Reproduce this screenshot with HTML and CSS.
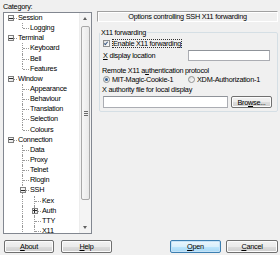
FILE: index.html
```html
<!DOCTYPE html>
<html lang="en">
<head>
<meta charset="UTF-8" />
<title>PuTTY Configuration</title>
<link rel="stylesheet" href="styles.css">
</head>
<body>
<div class="dialog">
  <div class="main">
    <div class="left">
      <div class="cat-label">Category:</div>
      <div class="tree-box">
        <ul class="tree">
          <li><span class="g b"><i class="exp minus"></i></span><span class="txt">Session</span></li>
          <li><span class="g"></span><span class="g l"></span><span class="txt">Logging</span></li>
          <li><span class="g b"><i class="exp minus"></i></span><span class="txt">Terminal</span></li>
          <li><span class="g"></span><span class="g t"></span><span class="txt">Keyboard</span></li>
          <li><span class="g"></span><span class="g t"></span><span class="txt">Bell</span></li>
          <li><span class="g"></span><span class="g l"></span><span class="txt">Features</span></li>
          <li><span class="g b"><i class="exp minus"></i></span><span class="txt">Window</span></li>
          <li><span class="g"></span><span class="g t"></span><span class="txt">Appearance</span></li>
          <li><span class="g"></span><span class="g t"></span><span class="txt">Behaviour</span></li>
          <li><span class="g"></span><span class="g t"></span><span class="txt">Translation</span></li>
          <li><span class="g"></span><span class="g t"></span><span class="txt">Selection</span></li>
          <li><span class="g"></span><span class="g l"></span><span class="txt">Colours</span></li>
          <li><span class="g b"><i class="exp minus"></i></span><span class="txt">Connection</span></li>
          <li><span class="g"></span><span class="g t"></span><span class="txt">Data</span></li>
          <li><span class="g"></span><span class="g t"></span><span class="txt">Proxy</span></li>
          <li><span class="g"></span><span class="g t"></span><span class="txt">Telnet</span></li>
          <li><span class="g"></span><span class="g t"></span><span class="txt">Rlogin</span></li>
          <li><span class="g"></span><span class="g b v"><i class="exp minus"></i></span><span class="txt">SSH</span></li>
          <li><span class="g"></span><span class="g v"></span><span class="g t"></span><span class="txt">Kex</span></li>
          <li><span class="g"></span><span class="g v"></span><span class="g b v"><i class="exp plus"></i></span><span class="txt">Auth</span></li>
          <li><span class="g"></span><span class="g v"></span><span class="g t"></span><span class="txt">TTY</span></li>
          <li><span class="g"></span><span class="g v"></span><span class="g t"></span><span class="txt">X11</span></li>
        </ul>
        <div class="scrollbar">
          <div class="arrow up"></div>
          <div class="track"><div class="thumb"><span class="grip"></span></div></div>
          <div class="arrow down"></div>
        </div>
      </div>
    </div>
    <div class="right">
      <div class="panel-title">Options controlling SSH X11 forwarding</div>
      <fieldset class="group">
        <legend>X11 forwarding</legend>
        <div class="check-row">
          <span class="checkbox checked"></span>
          <span class="focus">Enable X11 forwarding</span>
        </div>
        <div class="field-row">
          <span class="field-label"><u>X</u> display location</span>
          <span class="edit edit-short"></span>
        </div>
        <div class="plain-label">Remote X11 a<u>u</u>thentication protocol</div>
        <div class="radio-row">
          <span class="radio-item first"><span class="radio on"></span>MIT-Magic-Cookie-1</span>
          <span class="radio-item"><span class="radio"></span>XDM-Authorization-1</span>
        </div>
        <div class="plain-label">X authority file for local display</div>
        <div class="file-row">
          <span class="edit edit-long"></span>
          <span class="btn btn-browse">Bro<u>w</u>se...</span>
        </div>
      </fieldset>
    </div>
  </div>
  <div class="buttons">
    <span class="btn"><u>A</u>bout</span>
    <span class="btn btn-help"><u>H</u>elp</span>
    <span class="btn btn-default btn-open"><u>O</u>pen</span>
    <span class="btn btn-cancel"><u>C</u>ancel</span>
  </div>
</div>
</body>
</html>
```

FILE: styles.css
```css
:root{--bg:#f0f0f0;--txt:#000;--line:#999;--edge:#abadb3;}
*,*:before,*:after{box-sizing:border-box;}
html,body{margin:0;background:var(--bg);}
body{font-family:'Liberation Sans',Arial,sans-serif;font-size:7.3px;letter-spacing:-.25px;color:var(--txt);width:280px;height:255px;overflow:hidden;}
u{text-decoration:underline;text-underline-offset:1px;}

.main{display:flex;height:234px;}
.left{width:95px;padding-left:3px;display:flex;flex-direction:column;}
.cat-label{height:12px;padding-top:3px;line-height:8px;}
.tree-box{width:89px;height:222px;background:#fff;border:1px solid #828790;display:flex;overflow:hidden;}

ul.tree{list-style:none;margin:0;padding:0;flex:1;min-width:0;}
ul.tree li{display:flex;height:10.15px;align-items:center;white-space:nowrap;}
.g{position:relative;width:12px;height:100%;flex-shrink:0;display:flex;align-items:center;}
.g.t:before,.g.l:before,.g.v:before{content:'';position:absolute;left:6px;top:0;height:100%;border-left:1px dotted var(--line);}
.g.l:before{height:50%;}
.g.t:after,.g.l:after,.g.b:after{content:'';position:absolute;left:7px;right:-1px;top:50%;border-top:1px dotted var(--line);}
.g.b:after{left:9px;}
i.exp{position:relative;z-index:1;flex-shrink:0;width:6px;height:6px;margin-left:3.5px;border:1px solid #808080;background:linear-gradient(135deg,#fff,#e4e4e4);}
i.exp:before{content:'';position:absolute;left:0;top:1.5px;width:4px;height:1px;background:#2a2a2a;}
i.exp.plus:after{content:'';position:absolute;left:1.5px;top:0;width:1px;height:4px;background:#2a2a2a;}
.txt{padding-left:2px;line-height:10px;}

.scrollbar{width:12px;display:flex;flex-direction:column;background:#f4f4f4;border-left:1px solid #ededed;}
.arrow{height:12px;position:relative;}
.arrow:before{content:'';position:absolute;left:3px;border-left:2.5px solid transparent;border-right:2.5px solid transparent;}
.arrow.up:before{top:4px;border-bottom:3px solid #606060;}
.arrow.down:before{bottom:4px;border-top:3px solid #606060;}
.track{flex:1;padding:1px 1px 0 1px;}
.thumb{height:174px;border:1px solid #a8a8a8;border-radius:2px;background:linear-gradient(90deg,#f6f6f6,#e9e9e9);display:flex;align-items:center;justify-content:center;}
.grip{width:4px;height:5px;background:repeating-linear-gradient(#6a6a6a 0 1px,transparent 1px 2px);}

.right{flex:1;padding:11px 2px 0 2px;display:flex;flex-direction:column;}
.panel-title{height:11px;line-height:9px;text-align:center;border:1px solid #a0a0a0;border-right-color:#fff;border-bottom-color:#fff;box-shadow:inset 1px 1px 0 #fff;}
fieldset.group{margin:6px 0 0 2px;padding:0 0 3px 3px;border:1px solid #d5dfe5;border-radius:2px;height:84px;}
fieldset.group legend{padding:0 1px;margin-left:-3px;line-height:9px;}
.check-row{display:flex;align-items:center;margin-top:2px;height:9px;}
.checkbox{width:7px;height:7px;border:1px solid #8e8f8f;background:linear-gradient(135deg,#dedede,#fff);position:relative;}
.checkbox.checked:after{content:'';position:absolute;left:1px;top:0;width:2px;height:4px;border-right:1.5px solid #3b5a82;border-bottom:1.5px solid #3b5a82;transform:rotate(40deg);}
.focus{margin-left:2px;padding:0 1px;line-height:9px;outline:1px dotted #333;outline-offset:-1px;}
.field-row{display:flex;align-items:center;height:11px;margin-top:2px;}
.field-label{flex:1;}
.edit{display:block;background:#fff;border:1px solid var(--edge);border-top-color:#8f9399;}
.edit-short{width:82px;height:11px;margin-right:7px;}
.plain-label{line-height:9px;margin-left:-1px;}
.field-row+.plain-label{margin-top:5px;}
.radio-row{display:flex;height:9px;align-items:center;}
.radio-item{display:flex;align-items:center;}
.radio-item.first{width:85px;}
.radio{width:7px;height:7px;border-radius:50%;border:1px solid #8e8f8f;background:linear-gradient(135deg,#d8d8d8,#fff);margin-right:2px;position:relative;}
.radio.on:after{content:'';position:absolute;left:1px;top:1px;width:3px;height:3px;border-radius:50%;background:#2f5f96;}
.radio-row+.plain-label{margin-top:1px;}
.file-row{display:flex;align-items:center;gap:3px;margin-top:2px;}
.edit-long{width:125px;height:12px;}

.btn{display:flex;align-items:center;justify-content:center;height:13px;border:1px solid #707070;border-radius:2px;background:linear-gradient(#f2f2f2 0,#ebebeb 50%,#dddddd 51%,#cfcfcf 100%);box-shadow:inset 0 0 0 1px #fcfcfc;}
.btn-browse{width:41px;height:12px;}
.buttons{display:flex;padding:6px 2px 0 4px;}
.buttons .btn{width:50px;}
.buttons .btn-help{margin-left:7px;width:51px;}
.buttons .btn-open{margin-left:auto;width:51px;}
.buttons .btn-cancel{margin-left:5px;width:52px;}
.btn-default{border-color:#3c7fb1;background:linear-gradient(#eaf6fd 0,#d9f0fc 50%,#bee6fd 51%,#a7d9f5 100%);box-shadow:inset 0 0 0 1px #c6e3f7;}
```
